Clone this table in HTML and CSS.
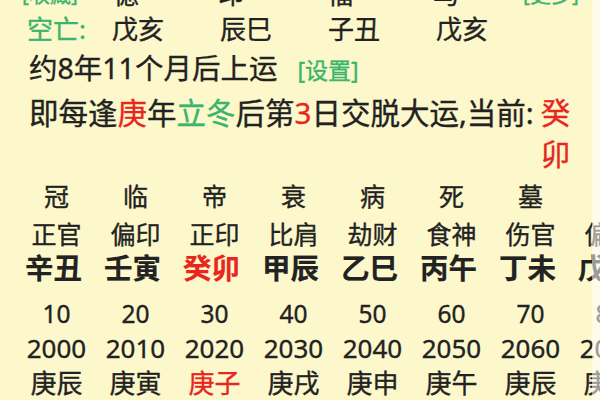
FILE: index.html
```html
<!DOCTYPE html>
<html lang="zh-CN">
<head>
<meta charset="utf-8">
<link rel="stylesheet" href="styles.css">
</head>
<body>
<div class="page">
  <div class="kv top-row">
    <span class="green small">[收藏]</span>
    <span>德</span><span>印</span><span>福</span><span>马</span>
    <span class="green small more">[更多]</span>
  </div>
  <div class="kv kong">
    <span class="green">空亡:</span>
    <span>戊亥</span><span>辰巳</span><span>子丑</span><span>戊亥</span>
  </div>
  <div class="line yun">约8年11个月后上运<span class="green set">[设置]</span></div>
  <div class="line jiao">
    <span class="jiao-text">即每逢<span class="red">庚</span>年<span class="green">立冬</span>后第<span class="red">3</span>日交脱大运,当前:</span>
    <span class="red cur">癸卯</span>
  </div>
  <div class="grid stage">
    <span>冠</span><span>临</span><span>帝</span><span>衰</span><span>病</span><span>死</span><span>墓</span><span></span>
  </div>
  <div class="grid shishen">
    <span>正官</span><span>偏印</span><span>正印</span><span>比肩</span><span>劫财</span><span>食神</span><span>伤官</span><span>偏财</span>
  </div>
  <div class="grid ganzhi">
    <span>辛丑</span><span>壬寅</span><span class="red">癸卯</span><span>甲辰</span><span>乙巳</span><span>丙午</span><span>丁未</span><span>戊申</span>
  </div>
  <div class="grid num age">
    <span>10</span><span>20</span><span>30</span><span>40</span><span>50</span><span>60</span><span>70</span><span>80</span>
  </div>
  <div class="grid num year">
    <span>2000</span><span>2010</span><span>2020</span><span>2030</span><span>2040</span><span>2050</span><span>2060</span><span>2070</span>
  </div>
  <div class="grid liunian">
    <span>庚辰</span><span>庚寅</span><span class="red">庚子</span><span>庚戌</span><span>庚申</span><span>庚午</span><span>庚辰</span><span>庚寅</span>
  </div>
  <div class="edge"></div>
</div>
</body>
</html>
```
FILE: styles.css
```css
html, body {
  margin: 0;
  padding: 0;
}
body {
  width: 600px;
  height: 400px;
  overflow: hidden;
  background: #fcf8cb;
  font-family: "Noto Sans", "Noto Sans CJK SC", sans-serif;
  color: #222;
  -webkit-text-stroke: 0.35px currentColor;
}
.page {
  position: relative;
  width: 600px;
  height: 400px;
  overflow: hidden;
}
.green { color: #3bb46d; }
.red { color: #e8261e; }

.kv {
  display: grid;
  grid-template-columns: 85px 108px 108px 108px 108px;
  padding-left: 27px;
  white-space: nowrap;
  font-size: 26px;
  line-height: 32px;
  height: 32px;
}
.top-row {
  margin-top: -22px;
  height: 35px;
  line-height: 32px;
  padding-left: 22px;
  grid-template-columns: 91px 105px 109px 106px 90px auto;
}
.small { font-size: 21px; }

.line {
  padding-left: 29px;
  white-space: nowrap;
}
.yun {
  font-size: 28.5px;
  line-height: 47px;
  height: 47px;
}
.set {
  font-size: 23px;
  margin-left: 20px;
}
.jiao {
  display: flex;
  font-size: 29.5px;
  line-height: 41px;
}
.cur {
  width: 30px;
  white-space: normal;
  margin-left: 7px;
}

.grid {
  display: grid;
  grid-template-columns: repeat(8, 79px);
  padding-left: 17px;
  text-align: center;
  white-space: nowrap;
}
.stage {
  font-size: 25px;
  line-height: 45px;
  height: 45px;
}
.shishen {
  font-size: 25px;
  line-height: 30px;
  height: 30px;
}
.ganzhi {
  font-size: 28.5px;
  font-weight: 700;
  line-height: 38px;
  height: 38px;
  -webkit-text-stroke: 0.2px currentColor;
}
.ganzhi span { padding-right: 6px; }
.num {
  font-size: 26px;
  line-height: 35px;
  height: 35px;
}
.age {
  margin-top: 9px;
  font-size: 24.5px;
}
.liunian {
  font-size: 26px;
  line-height: 35px;
  height: 35px;
}
.edge {
  position: absolute;
  top: 0;
  left: 592px;
  width: 8px;
  height: 400px;
  background: rgba(255, 255, 255, 0.55);
}
```
